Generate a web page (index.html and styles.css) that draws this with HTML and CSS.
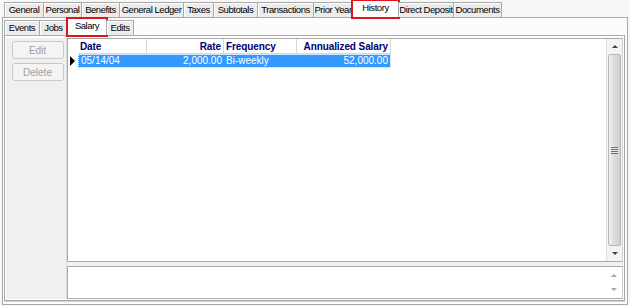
FILE: index.html
```html
<!DOCTYPE html>
<html lang="en">
<head>
    <meta charset="UTF-8">
    <title>Employee History - Salary</title>
    <link rel="stylesheet" href="styles.css">
</head>
<body>
    <div class="window">
        <div class="tabs top-tabs">
            <div class="tab">General</div>
            <div class="tab">Personal</div>
            <div class="tab">Benefits</div>
            <div class="tab">General Ledger</div>
            <div class="tab">Taxes</div>
            <div class="tab">Subtotals</div>
            <div class="tab">Transactions</div>
            <div class="tab">Prior Year</div>
            <div class="tab active marked">History</div>
            <div class="tab">Direct Deposit</div>
            <div class="tab">Documents</div>
        </div>

        <div class="sheet">
            <div class="tabs sub-tabs">
                <div class="tab">Events</div>
                <div class="tab">Jobs</div>
                <div class="tab active marked">Salary</div>
                <div class="tab">Edits</div>
            </div>

            <div class="inner-sheet">
                <div class="button-col">
                    <button class="btn" disabled>Edit</button>
                    <button class="btn" disabled>Delete</button>
                </div>

                <div class="content">
                    <div class="grid-box">
                        <div class="grid">
                            <div class="grid-row head">
                                <div class="cell ind"></div>
                                <div class="cell c-date">Date</div>
                                <div class="cell c-rate num">Rate</div>
                                <div class="cell c-freq">Frequency</div>
                                <div class="cell c-annual num">Annualized Salary</div>
                            </div>
                            <div class="grid-row selected">
                                <div class="cell ind"><span class="pointer"></span></div>
                                <div class="cell c-date">05/14/04</div>
                                <div class="cell c-rate num">2,000.00</div>
                                <div class="cell c-freq">Bi-weekly</div>
                                <div class="cell c-annual num">52,000.00</div>
                            </div>
                        </div>
                        <div class="vscroll">
                            <div class="arrow up"></div>
                            <div class="track"><div class="thumb"><span class="grip"></span></div></div>
                            <div class="arrow down"></div>
                        </div>
                    </div>

                    <div class="memo">
                        <div class="memo-text"></div>
                        <div class="memo-scroll">
                            <div class="arrow up faint"></div>
                            <div class="arrow down faint"></div>
                        </div>
                    </div>
                </div>
            </div>
        </div>
    </div>
</body>
</html>
```

FILE: styles.css
```css
body, html {
    margin: 0;
    padding: 0;
    font-family: "Liberation Sans", Arial, sans-serif;
    font-size: 10px;
    color: #000;
    background-color: #f7f7f7;
}

.window {
    width: 630px;
    height: 306px;
    display: flex;
    flex-direction: column;
}

/* tab strips */
.tabs {
    display: flex;
    align-items: flex-end;
    position: relative;
    z-index: 1;
}

.top-tabs {
    height: 17px;
    padding-left: 4px;
}

.sub-tabs {
    height: 17px;
    padding-left: 1px;
}

.tab {
    height: 15px;
    line-height: 14px;
    box-sizing: border-box;
    border: 1px solid #a9a9a9;
    border-bottom: none;
    background-color: #ececec;
    font-size: 9.5px;
    letter-spacing: -0.45px;
    text-align: center;
    white-space: nowrap;
    box-shadow: inset 1px 1px 0 #fff;
}

.tab + .tab {
    margin-left: -1px;
}

/* tab widths, measured from the original form */
.top-tabs .tab:nth-child(1) { width: 40px; }
.top-tabs .tab:nth-child(2) { width: 39px; }
.top-tabs .tab:nth-child(3) { width: 39px; }
.top-tabs .tab:nth-child(4) { width: 65px; }
.top-tabs .tab:nth-child(5) { width: 31px; }
.top-tabs .tab:nth-child(6) { width: 45px; }
.top-tabs .tab:nth-child(7) { width: 57px; }
.top-tabs .tab:nth-child(8) { width: 40px; }
.top-tabs .tab:nth-child(9) { width: 47px; }
.top-tabs .tab:nth-child(10) { width: 56px; }
.top-tabs .tab:nth-child(11) { width: 49px; }

.sub-tabs .tab:nth-child(1) { width: 36px; }
.sub-tabs .tab:nth-child(2) { width: 29px; }
.sub-tabs .tab:nth-child(3) { width: 40px; }
.sub-tabs .tab:nth-child(4) { width: 28px; }

.tab.active {
    height: 18px;
    background-color: #fff;
    margin-bottom: -1px;
    box-shadow: none;
}

.tab.marked {
    outline: 2px solid #e3131b;
    outline-offset: -1px;
    line-height: 14px;
}

.sheet {
    flex: 1;
    margin: 0 2px 1px 2px;
    border: 1px solid #a9a9a9;
    background-color: #fcfcfc;
    display: flex;
    flex-direction: column;
}

.inner-sheet {
    flex: 1;
    margin: 0 2px 3px 1px;
    border: 1px solid #a9a9a9;
    box-shadow: inset 1px 1px 0 #fff, 0 1px 0 #d0d0d0;
    background-color: #fff;
    display: flex;
    padding: 2px 1px 1px 1px;
}

/* left buttons */
.button-col {
    width: 60px;
    background-color: #f0f0f0;
    border-right: 1px solid #dcdcdc;
    display: flex;
    flex-direction: column;
    align-items: center;
    padding-top: 3px;
    gap: 4px;
}

.btn {
    width: 52px;
    height: 18px;
    font-family: inherit;
    font-size: 10px;
    color: #a0a0a0;
    background-color: #f4f4f4;
    border: 1px solid #c8c8c8;
    border-radius: 3px;
    padding: 0;
    margin-left: 3px;
}

.content {
    flex: 1;
    display: flex;
    flex-direction: column;
    gap: 4px;
    background-color: #f0f0f0;
}

/* grid */
.grid-box {
    flex: 1;
    border: 1px solid #a9a9a9;
    border-right-color: #d0d0d0;
    display: flex;
    background-color: #fff;
}

.grid {
    flex: 1;
}

.grid-row {
    display: flex;
    height: 14px;
    line-height: 14px;
}

.grid-row.head {
    height: 15px;
    line-height: 15px;
    font-weight: bold;
    color: #00006e;
    letter-spacing: -0.1px;
}

.grid-row.head .cell {
    border-right: 1px solid #d8d8d8;
    border-bottom: 1px solid #d8d8d8;
}

.cell {
    padding: 0 2px;
    box-sizing: border-box;
    white-space: nowrap;
    overflow: hidden;
}

.ind {
    width: 10px;
    padding: 0;
    display: flex;
    align-items: center;
}

.grid-row.head .ind {
    border: none;
}

.c-date { width: 69px; }
.c-rate { width: 77px; }
.c-freq { width: 73px; }
.c-annual { width: 94px; }

.num {
    text-align: right;
}

.grid-row.selected .cell:not(.ind) {
    background-color: #3399ff;
    color: #fff;
    border-top: 1px solid #cfe6ff;
    border-bottom: 1px solid #cfe6ff;
    line-height: 12px;
}

.grid-row.selected .c-date {
    border-left: 1px dotted #fff;
}

.grid-row.selected .c-annual {
    border-right: 1px solid #cfe6ff;
}

.pointer {
    width: 0;
    height: 0;
    border-top: 5px solid transparent;
    border-bottom: 5px solid transparent;
    border-left: 5px solid #000;
    margin-left: 2px;
}

/* scrollbars */
.vscroll {
    width: 15px;
    border-left: 1px solid #e0e0e0;
    background-color: #f4f4f4;
    display: flex;
    flex-direction: column;
}

.arrow {
    height: 15px;
    display: flex;
    align-items: center;
    justify-content: center;
}

.arrow::after {
    content: "";
    width: 0;
    height: 0;
    border-left: 3px solid transparent;
    border-right: 3px solid transparent;
}

.arrow.up::after {
    border-bottom: 3px solid #404040;
}

.arrow.down::after {
    border-top: 3px solid #404040;
}

.arrow.faint.up::after {
    border-bottom-color: #a8a8a8;
}

.arrow.faint.down::after {
    border-top-color: #a8a8a8;
}

.track {
    flex: 1;
    padding: 0 1px;
    display: flex;
}

.thumb {
    flex: 1;
    border: 1px solid #b8b8b8;
    border-radius: 2px;
    background: linear-gradient(to right, #f0f0f0, #dcdcdc 50%, #cfcfcf);
    display: flex;
    align-items: center;
    justify-content: center;
}

.grip {
    width: 7px;
    height: 7px;
    background: repeating-linear-gradient(to bottom, #707070 0, #707070 1px, #e8e8e8 1px, #e8e8e8 2px);
}

.memo {
    height: 31px;
    border: 1px solid #a9a9a9;
    border-right-color: #d0d0d0;
    display: flex;
    background-color: #fff;
}

.memo-text {
    flex: 1;
}

.memo-scroll {
    width: 17px;
    display: flex;
    flex-direction: column;
    justify-content: space-between;
    padding: 2px 0;
}
```
